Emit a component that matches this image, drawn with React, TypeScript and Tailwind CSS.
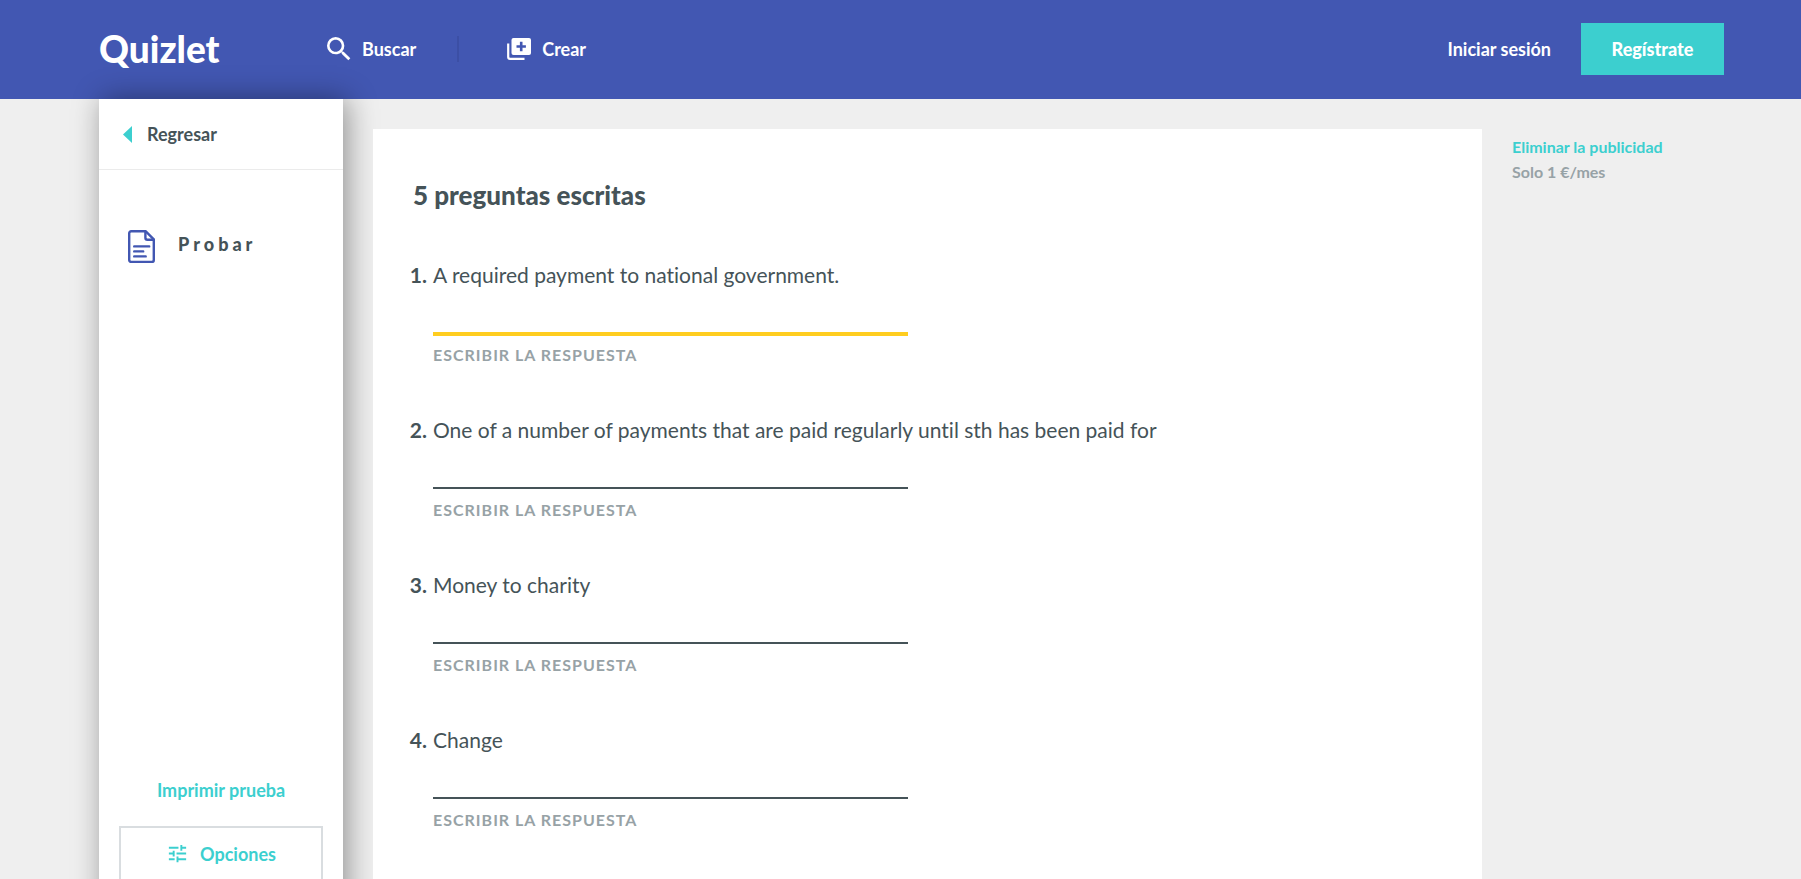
import React from 'react';
import { MdSearch, MdTune } from 'react-icons/md';

const questions = [
  'A required payment to national government.',
  'One of a number of payments that are paid regularly until sth has been paid for',
  'Money to charity',
  'Change',
];

const CreateIcon: React.FC = () => (
  <svg width="24" height="22" viewBox="0 0 24 22" aria-hidden="true">
    <path d="M1.2 5.5V19a1.8 1.8 0 0 0 1.8 1.8h14.5" fill="none" stroke="#fff" strokeWidth="2.2" />
    <rect x="4.5" y="0" width="19.5" height="17" rx="2" fill="#fff" />
    <path d="M14.2 3.8v9.4M9.5 8.5h9.4" stroke="#4257b2" strokeWidth="2.6" />
  </svg>
);

const DocumentIcon: React.FC = () => (
  <svg width="28" height="34" viewBox="0 0 28 34" fill="none" stroke="#4257b2" strokeWidth="2.4" strokeLinecap="round" strokeLinejoin="round" aria-hidden="true">
    <path d="M3.2 1.3h14.6l8 8v20.6a2 2 0 0 1-2 2H3.2a2 2 0 0 1-2-2V3.3a2 2 0 0 1 2-2Z" />
    <path d="M17.4 1.6v6.2a2 2 0 0 0 2 2h6.2" />
    <path d="M6.2 16.4h15M6.2 21.4h9M6.2 26.4h11.5" />
  </svg>
);

const Header: React.FC = () => (
  <header className="flex h-[99px] shrink-0 items-center bg-[#4257b2] pr-[77px] pb-0.5 pl-[99px] text-lg font-bold text-white">
    <a href="#" className="w-[120px] text-[37px] leading-[44px] font-black">
      Quizlet
    </a>
    <nav className="ml-[104px] flex items-center">
      <button type="button" className="flex items-center gap-[7px]">
        <MdSearch size={32} />
        Buscar
      </button>
      <span className="ml-[41px] h-[26px] w-0.5 bg-[#3c4fa5]" />
      <button type="button" className="ml-12 flex items-center gap-[11px]">
        <CreateIcon />
        Crear
      </button>
    </nav>
    <div className="ml-auto flex items-center gap-[30px]">
      <button type="button">Iniciar sesión</button>
      <button type="button" className="h-[52px] w-[143px] bg-[#3ccfcf] font-black">
        Regístrate
      </button>
    </div>
  </header>
);

const Sidebar: React.FC = () => (
  <div className="-mb-10 flex w-[244px] shrink-0 flex-col bg-white pb-10 text-lg font-bold shadow-[4px_0_28px_rgba(0,0,0,0.4)]">
    <a href="#" className="flex h-[71px] items-center gap-[15px] border-b border-[#ebebeb] pl-6">
      <svg width="9" height="17" viewBox="0 0 9 17" fill="#3ccfcf" aria-hidden="true">
        <path d="M9 0v17L0 8.5Z" />
      </svg>
      Regresar
    </a>
    <div className="mt-[60px] flex items-start gap-[22px] pl-[29px]">
      <DocumentIcon />
      <h1 className="leading-7 font-black tracking-[4px]">Probar</h1>
    </div>
    <div className="mt-auto flex flex-col gap-6 px-5 text-[#3ccfcf]">
      <a href="#" className="text-center leading-6">
        Imprimir prueba
      </a>
      <button type="button" className="flex h-[53px] items-center justify-center gap-[11px] border-2 border-b-0 border-[#d9dde0]">
        <MdTune size={23} />
        Opciones
      </button>
    </div>
  </div>
);

const QuestionList: React.FC = () => (
  <ol className="mt-[50px] flex flex-col gap-[51px]">
    {questions.map((question, i) => (
      <li key={question} className="grid grid-cols-[18px_1fr] gap-x-[6px]">
        <span className="flex justify-end text-[21px] leading-7 font-bold">{i + 1}.</span>
        <div>
          <p className="text-[21px] leading-7">{question}</p>
          <div className="h-12">
            <input
              id={`answer-${i}`}
              type="text"
              className={
                i === 0
                  ? 'h-[47px] w-[475px] border-b-4 border-[#ffcd1f] text-[21px] outline-none'
                  : 'h-[45px] w-[475px] border-b-2 border-[#455358] text-[21px] outline-none'
              }
            />
          </div>
          <label htmlFor={`answer-${i}`} className="mt-2 block text-base leading-5 font-bold tracking-[1px] text-[#97a2a6] uppercase">
            Escribir la respuesta
          </label>
        </div>
      </li>
    ))}
  </ol>
);

const App: React.FC = () => {
  return (
    <div className="flex h-screen flex-col overflow-hidden bg-[#efefef] font-[Lato,sans-serif] text-[#455358] [font-variant-ligatures:none]">
      <Header />
      <div className="flex min-h-0 flex-1 pr-[77px] pl-[99px]">
        <Sidebar />
        <main className="z-10 mt-[30px] ml-[30px] flex-1 overflow-hidden bg-white pt-[50px] pl-9">
          <h2 className="pl-1 text-[26px] leading-8 font-black">5 preguntas escritas</h2>
          <QuestionList />
        </main>
        <aside className="mt-[35px] ml-[30px] w-[212px] shrink-0 text-base leading-[25px] font-bold text-[#97a2a6]">
          <a href="#" className="block text-[#3ccfcf]">
            Eliminar la publicidad
          </a>
          <p>Solo 1 €/mes</p>
        </aside>
      </div>
    </div>
  );
};

export default App;
